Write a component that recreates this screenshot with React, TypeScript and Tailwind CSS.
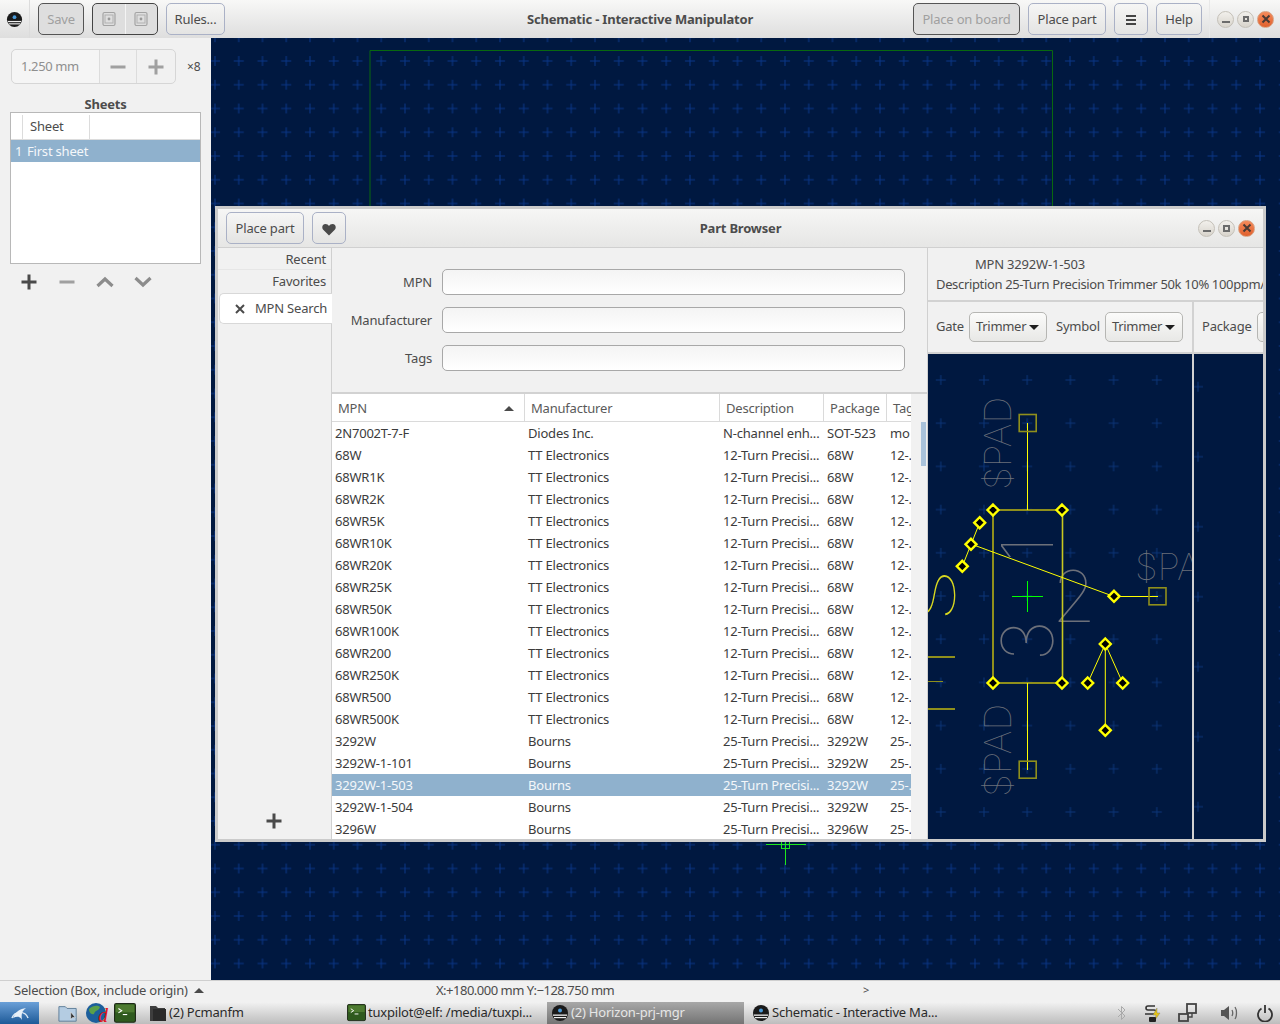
import React from "react";

const rows: [string, string, string, string, string][] = [
  ["2N7002T-7-F", "Diodes Inc.", "N-channel enh...", "SOT-523", "mo"],
  ["68W", "TT Electronics", "12-Turn Precisi...", "68W", "12-."],
  ["68WR1K", "TT Electronics", "12-Turn Precisi...", "68W", "12-."],
  ["68WR2K", "TT Electronics", "12-Turn Precisi...", "68W", "12-."],
  ["68WR5K", "TT Electronics", "12-Turn Precisi...", "68W", "12-."],
  ["68WR10K", "TT Electronics", "12-Turn Precisi...", "68W", "12-."],
  ["68WR20K", "TT Electronics", "12-Turn Precisi...", "68W", "12-."],
  ["68WR25K", "TT Electronics", "12-Turn Precisi...", "68W", "12-."],
  ["68WR50K", "TT Electronics", "12-Turn Precisi...", "68W", "12-."],
  ["68WR100K", "TT Electronics", "12-Turn Precisi...", "68W", "12-."],
  ["68WR200", "TT Electronics", "12-Turn Precisi...", "68W", "12-."],
  ["68WR250K", "TT Electronics", "12-Turn Precisi...", "68W", "12-."],
  ["68WR500", "TT Electronics", "12-Turn Precisi...", "68W", "12-."],
  ["68WR500K", "TT Electronics", "12-Turn Precisi...", "68W", "12-."],
  ["3292W", "Bourns", "25-Turn Precisi...", "3292W", "25-."],
  ["3292W-1-101", "Bourns", "25-Turn Precisi...", "3292W", "25-."],
  ["3292W-1-503", "Bourns", "25-Turn Precisi...", "3292W", "25-."],
  ["3292W-1-504", "Bourns", "25-Turn Precisi...", "3292W", "25-."],
  ["3296W", "Bourns", "25-Turn Precisi...", "3296W", "25-."],
];

function Btn({ w, children }: { w: string; children: React.ReactNode }) {
  return (
    <div className={`${w} h-[32px] pt-[2px] flex items-center justify-center rounded-[5px] border border-[#aab1c6] bg-linear-to-b from-[#f6f6f5] to-[#e4e4e3] text-[#4c4c4c]`}>
      {children}
    </div>
  );
}

function HorizonIcon({ size = 18 }: { size?: number }) {
  return (
    <svg width={size} height={size} viewBox="0 0 18 18" className="shrink-0">
      <circle cx="9" cy="9" r="8" fill="#1a1a1a" />
      <circle cx="9" cy="6.5" r="2" fill="#4a9ad8" />
      <rect x="2" y="10.5" width="14" height="1.3" fill="#eee" />
      <rect x="3" y="13" width="12" height="1.2" fill="#eee" />
    </svg>
  );
}

function PhotoIcon() {
  return (
    <svg width="16" height="16" viewBox="0 0 16 16">
      <rect x="2" y="1.5" width="12" height="13" rx="1.5" fill="none" stroke="#a3a3a3" strokeWidth="1.2" />
      <rect x="4" y="4" width="8" height="8" fill="none" stroke="#b0b0b0" />
      <circle cx="8" cy="8" r="1.4" fill="#999" />
    </svg>
  );
}

function WinButtons({ dark }: { dark?: boolean }) {
  return (
    <div className="flex items-center gap-[3px]">
      <div className="w-[17px] h-[17px] rounded-full border border-[#c4c0b8] bg-linear-to-b from-[#f2f0ec] to-[#d8d4cc] flex items-center justify-center">
        <div className="w-[8px] h-[2px] mt-[5px] bg-[#6b6b6b]" />
      </div>
      <div className="w-[17px] h-[17px] rounded-full border border-[#c4c0b8] bg-linear-to-b from-[#f2f0ec] to-[#d8d4cc] flex items-center justify-center">
        <div className={`${dark ? "w-[7px] h-[7px]" : "w-[6px] h-[6px]"} border-2 border-[#6b6b6b]`} />
      </div>
      <div className="w-[17px] h-[17px] rounded-full border border-[#d8a080] bg-linear-to-b from-[#f58a5a] to-[#e0602c] flex items-center justify-center">
        <svg width="10" height="10" viewBox="0 0 10 10">
          <path d="M1.5 1.5L8.5 8.5M8.5 1.5L1.5 8.5" stroke="#4a3a34" strokeWidth="2" />
        </svg>
      </div>
    </div>
  );
}

function Plus({ color = "#4a4a4a" }: { color?: string }) {
  return (
    <svg width="16" height="16" viewBox="0 0 16 16">
      <rect x="0.5" y="6.5" width="15" height="3" fill={color} />
      <rect x="6.5" y="0.5" width="3" height="15" fill={color} />
    </svg>
  );
}

function Minus({ color = "#a0a0a0" }: { color?: string }) {
  return (
    <svg width="16" height="16" viewBox="0 0 16 16">
      <rect x="0.5" y="6.5" width="15" height="3" fill={color} />
    </svg>
  );
}

function Chevron({ up }: { up?: boolean }) {
  return (
    <svg width="18" height="12" viewBox="0 0 18 12">
      <path d={up ? "M1.5 10L9 3l7.5 7" : "M1.5 2L9 9l7.5-7"} fill="none" stroke="#8c8c8c" strokeWidth="3.2" />
    </svg>
  );
}

function Caret() {
  return <div className="w-0 h-0 border-x-[5px] border-x-transparent border-t-[5px] border-t-[#1e1e1e]" />;
}

function Dropdown({ label }: { label: string }) {
  return (
    <div className="w-[78px] h-[30px] shrink-0 flex items-center justify-between pl-[6px] pr-[7px] rounded-[5px] border border-[#b6b6b3] bg-linear-to-b from-[#fbfbfa] to-[#e8e8e6] text-[#4c4c4c]">
      <span className="tracking-[-0.3px]">{label}</span>
      <Caret />
    </div>
  );
}

function MainCanvas() {
  return (
    <svg className="absolute inset-0 w-full h-full" viewBox="211 38 1069 942">
      <defs>
        <pattern id="grid" patternUnits="userSpaceOnUse" x="203.125" y="49.125" width="23.75" height="23.75">
          <path d="M6.875 11.875h10M11.875 6.875v10" stroke="#0a3688" strokeWidth="1" />
        </pattern>
      </defs>
      <rect x="211" y="38" width="1069" height="942" fill="#001840" />
      <rect x="211" y="38" width="1069" height="942" fill="url(#grid)" />
      <path d="M370 400V50.500H1052.500V400" fill="none" stroke="#08680f" strokeWidth="1" />
      <g stroke="#1ee81e" strokeWidth="1" fill="none" shapeRendering="crispEdges">
        <path d="M766 844.500H806M785.500 848V865" />
        <rect x="781.500" y="841.500" width="8" height="7" />
        <path d="M785.500 841V848" />
      </g>
    </svg>
  );
}

function Diamond({ x, y }: { x: number; y: number }) {
  return <path d={`M${x} ${y - 5.5}L${x + 5.5} ${y}L${x} ${y + 5.5}L${x - 5.5} ${y}Z`} fill="#000" stroke="#ffff00" strokeWidth="2.4" />;
}

function Pad({ x, y }: { x: number; y: number }) {
  return <rect x={x - 8.5} y={y - 8.5} width="17" height="17" fill="none" stroke="#8f8f1c" strokeWidth="1.6" />;
}

const strokeFont = { fontFamily: "Inter, sans-serif", fontWeight: 100 };

function SymbolPreview() {
  return (
    <svg className="w-full h-full block" viewBox="928 354 264 485">
      <defs>
        <pattern id="pgrid" patternUnits="userSpaceOnUse" x="919.200" y="358.400" width="43.200" height="43.200">
          <path d="M16.600 21.600h10M21.600 16.600v10" stroke="#0b3478" strokeWidth="1" />
        </pattern>
      </defs>
      <rect x="928" y="354" width="264" height="485" fill="#001840" />
      <rect x="928" y="354" width="264" height="485" fill="url(#pgrid)" />

      <g fill="#6c707a" style={strokeFont}>
        <text transform="translate(1011 490) rotate(-90)" fontSize="37" textLength="93" lengthAdjust="spacingAndGlyphs">$PAD</text>
        <text transform="translate(1011 797) rotate(-90)" fontSize="37" textLength="93" lengthAdjust="spacingAndGlyphs">$PAD</text>
        <text x="1135" y="580" fontSize="37">$PAD</text>
        <text transform="translate(1053 549) rotate(-90)" fontSize="71" textAnchor="middle">1</text>
        <text transform="translate(1053 641) rotate(-90)" fontSize="71" textAnchor="middle">3</text>
        <text x="1074" y="622" fontSize="71" textAnchor="middle">2</text>
      </g>
      <text transform="translate(955 622) rotate(-90) scale(1.600 1)" fontSize="55" fill="#d8d820" style={strokeFont}>S</text>

      <g stroke="#8f8f1c" strokeWidth="2" fill="none">
        <path d="M993 510H1062M993 683H1062M993 510V683" />
        <path d="M928 657H955M928 709H955" />
      </g>
      <path d="M928 681.500H943" stroke="#8f8f1c" strokeWidth="1" />
      <path d="M1062.500 510V683" stroke="#c8c820" strokeWidth="1.600" />
      <g stroke="#ffff00" strokeWidth="1" fill="none">
        <path d="M1027.500 423V510M1027.500 683V770M1114 596.500H1158M971 544L1114 596.500M979.700 522.700L962.300 566.300M1105.300 644L1087.700 683M1105.300 644L1122.700 683M1105.300 644V730" />
      </g>
      <Pad x={1027.7} y={423} />
      <Pad x={1027.7} y={769.7} />
      <Pad x={1157.5} y={596.3} />
      <path d="M1012 596.500H1043M1027.500 581V612" stroke="#00ff00" strokeWidth="1" shapeRendering="crispEdges" />
      {[
        [993, 510], [1062, 510], [993, 683], [1062, 683],
        [979.7, 522.7], [971, 544.3], [962.3, 566.3], [1114, 596.3],
        [1105.3, 644], [1087.7, 683], [1122.7, 683], [1105.3, 730.3],
      ].map(([x, y]) => (
        <Diamond key={`${x}-${y}`} x={x} y={y} />
      ))}
    </svg>
  );
}

function PackagePreview() {
  return (
    <svg className="w-full h-full block" viewBox="1194 354 70 485" preserveAspectRatio="xMinYMin slice">
      <defs>
        <pattern id="qgrid" patternUnits="userSpaceOnUse" x="1163" y="351.700" width="70" height="70">
          <path d="M30 35h10M35 30v10" stroke="#0b3478" strokeWidth="1" />
        </pattern>
      </defs>
      <rect x="1194" y="354" width="70" height="485" fill="#001840" />
      <rect x="1194" y="354" width="70" height="485" fill="url(#qgrid)" />
    </svg>
  );
}

function PartBrowser() {
  return (
    <div className="absolute left-[4px] top-[168px] w-[1051px] h-[636px] border-[3px] border-[#cbcbcb] flex flex-col bg-[#f1f1f1] text-[#4c4c4c]">
      <div className="h-[39px] shrink-0 grid grid-cols-[1fr_auto_1fr] items-center px-[8px] border-b border-[#d0d0d0] bg-linear-to-b from-[#f6f6f5] to-[#e6e6e5]">
        <div className="flex items-center gap-[8px]">
          <Btn w="w-[78px]"><span>Place part</span></Btn>
          <Btn w="w-[34px]">
            <svg width="14" height="13" viewBox="0 0 14 13">
              <path d="M7 12.500L1 6.500C-.5 4.500.3 1 3.500 1 5 1 6.300 1.800 7 3c.7-1.200 2-2 3.500-2 3.200 0 4 3.500 2.500 5.500z" fill="#4a4a4a" />
            </svg>
          </Btn>
        </div>
        <div className="font-bold text-[#4c4c4c] pt-[2px]">Part Browser</div>
        <div className="flex justify-end"><WinButtons dark /></div>
      </div>
      <div className="flex-1 flex min-h-0">
        <div className="w-[114px] shrink-0 flex flex-col border-r border-[#d0d0d0]">
          <div className="h-[22px] pt-[2px] flex items-center justify-end pr-[5px] border-b border-[#e6e6e6]">Recent</div>
          <div className="h-[22px] pt-[2px] flex items-center justify-end pr-[5px]">Favorites</div>
          <div className="h-[31px] mt-[1px] ml-[1px] -mr-[1px] flex items-center pl-[15px] gap-[10px] bg-white border border-[#d8d8d8] border-r-0 rounded-l-[5px]">
            <svg width="10" height="10" viewBox="0 0 10 10">
              <path d="M1 1L9 9M9 1L1 9" stroke="#4a4a4a" strokeWidth="2" />
            </svg>
            <span>MPN Search</span>
          </div>
          <div className="flex-1 flex items-end justify-center pr-[2px] pb-[10px]"><Plus /></div>
        </div>
        <div className="w-[596px] shrink-0 flex flex-col min-h-0 border-r border-[#d0d0d0]">
          <div className="h-[144px] shrink-0 grid grid-cols-[100px_463px] items-center content-start pt-[21px] gap-x-[10px] gap-y-[12px]">
            {["MPN", "Manufacturer", "Tags"].map((l) => (
              <React.Fragment key={l}>
                <div className="text-right pt-[2px]">{l}</div>
                <div className="h-[26px] rounded-[5px] border border-[#a8a8a8] bg-linear-to-b from-[#f4f4f4] to-white" />
              </React.Fragment>
            ))}
          </div>
          <div className="h-[2px] shrink-0 bg-[#d2d2d2]" />
          <div className="flex-1 flex min-h-0">
            <div className="w-[579px] shrink-0 bg-white overflow-hidden">
              <div className="h-[28px] grid grid-cols-[193px_195px_104px_63px_24px] border-b border-[#dadada] text-[#5a5a5a]">
                <div className="flex items-center justify-between pt-[2px] pl-[6px] pr-[10px] border-r border-[#dadada]">
                  <span>MPN</span>
                  <div className="w-0 h-0 border-x-[5px] border-x-transparent border-b-[5px] border-b-[#4a4a4a]" />
                </div>
                <div className="flex items-center pt-[2px] pl-[6px] border-r border-[#dadada]">Manufacturer</div>
                <div className="flex items-center pt-[2px] pl-[6px] border-r border-[#dadada]">Description</div>
                <div className="flex items-center pt-[2px] pl-[6px] border-r border-[#dadada] whitespace-nowrap">Package</div>
                <div className="flex items-center pt-[2px] pl-[6px] overflow-hidden">Tags</div>
              </div>
              {rows.map((r) => {
                const sel = r[0] === "3292W-1-503";
                return (
                  <div key={r[0]} className={`h-[22px] grid grid-cols-[193px_195px_104px_63px_24px] items-center ${sel ? "bg-[#8fb1cd] text-[#f4f7fa]" : "text-[#3c3c3c]"}`}>
                    {r.map((c, i) => (
                      <div key={i} className="pl-[3px] pt-[2px] overflow-hidden whitespace-nowrap">{c}</div>
                    ))}
                  </div>
                );
              })}
            </div>
            <div className="w-[16px] shrink-0 bg-[#f1f1f1] relative">
              <div className="absolute left-[10px] top-[28px] w-[5px] h-[44px] bg-[#a9c2da]" />
            </div>
          </div>
        </div>
        <div className="flex-1 min-w-0 flex flex-col overflow-hidden">
          <div className="h-[54px] shrink-0 flex flex-col justify-center gap-[2px] pl-[8px] border-b-2 border-[#d2d2d2] whitespace-nowrap">
            <div className="pl-[39px] leading-[18px]">MPN 3292W-1-503</div>
            <div className="leading-[18px] tracking-[-0.35px]">Description 25-Turn Precision Trimmer 50k 10% 100ppm/°C</div>
          </div>
          <div className="flex-1 flex min-h-0">
            <div className="w-[264px] shrink-0 flex flex-col">
              <div className="h-[52px] shrink-0 flex items-center pl-[8px] gap-[5px] border-b-2 border-[#d2d2d2]">
                <span>Gate</span>
                <Dropdown label="Trimmer" />
                <span className="ml-[4px]">Symbol</span>
                <Dropdown label="Trimmer" />
              </div>
              <div className="flex-1 min-h-0"><SymbolPreview /></div>
            </div>
            <div className="w-[2px] shrink-0 bg-[#d2d2d2]" />
            <div className="flex-1 min-w-0 flex flex-col">
              <div className="h-[52px] shrink-0 flex items-center pl-[8px] gap-[5px] border-b-2 border-[#d2d2d2] overflow-hidden">
                <span>Package</span>
                <div className="w-[30px] h-[30px] shrink-0 rounded-[5px] border border-[#b6b6b3] bg-linear-to-b from-[#fbfbfa] to-[#e8e8e6]" />
              </div>
              <div className="flex-1 min-h-0"><PackagePreview /></div>
            </div>
          </div>
        </div>
      </div>
    </div>
  );
}

function TaskItem({ w, active, icon, label }: { w: string; active?: boolean; icon: React.ReactNode; label: string }) {
  return (
    <div className={`${w} h-full shrink-0 flex items-center gap-[2px] overflow-hidden whitespace-nowrap ${active ? "bg-linear-to-b from-[#a8a8a8] to-[#747474] text-[#e6e6e6]" : "text-[#2a2a2a]"}`}>
      {icon}
      <span>{label}</span>
    </div>
  );
}

function TermIcon({ size = 22 }: { size?: number }) {
  return (
    <svg width={size} height={size * 0.9} viewBox="0 0 20 18" className="shrink-0">
      <rect x="0.500" y="0.500" width="19" height="17" rx="1.500" fill="#2f5a1e" stroke="#1f2a18" />
      <rect x="1.500" y="1.500" width="17" height="7" fill="#4d7a30" />
      <path d="M4 5l3 2-3 2" fill="none" stroke="#fff" strokeWidth="1" />
      <rect x="8" y="10" width="4" height="1" fill="#fff" />
    </svg>
  );
}

export default function App() {
  return (
    <div className="w-[1280px] h-[1024px] flex flex-col overflow-hidden bg-[#f1f1f1] font-['Noto_Sans',sans-serif] text-[13px] tracking-[-0.2px] text-[#4c4c4c]">
      <header className="h-[38px] shrink-0 grid grid-cols-[1fr_auto_1fr] items-center bg-linear-to-b from-[#f8f8f7] to-[#dedede]">
        <div className="flex items-center h-full">
          <div className="w-[30px] h-full shrink-0 flex items-center justify-center border-r border-[#dcdcdc]">
            <HorizonIcon size={17} />
          </div>
          <div className="ml-[8px] w-[46px] h-[32px] pt-[2px] flex items-center justify-center rounded-[5px] border border-[#555] bg-[#dedede] text-[#a0a0a0]">Save</div>
          <div className="ml-[8px] w-[66px] h-[32px] flex rounded-[5px] border border-[#444] bg-[#dedede]">
            <div className="flex-1 flex items-center justify-center border-r border-[#f4f4f4]"><PhotoIcon /></div>
            <div className="flex-1 flex items-center justify-center"><PhotoIcon /></div>
          </div>
          <div className="ml-[8px]"><Btn w="w-[59px]"><span>Rules...</span></Btn></div>
        </div>
        <div className="font-bold pt-[2px]">Schematic - Interactive Manipulator</div>
        <div className="flex items-center justify-end h-full">
          <div className="w-[107px] h-[32px] pt-[2px] flex items-center justify-center rounded-[5px] border border-[#555] bg-[#dedede] text-[#a0a0a0]">Place on board</div>
          <div className="ml-[8px]"><Btn w="w-[78px]"><span>Place part</span></Btn></div>
          <div className="ml-[8px]">
            <Btn w="w-[34px]">
              <svg width="12" height="10" viewBox="0 0 12 10">
                <path d="M1 1h10M1 5h10M1 9h10" stroke="#444" strokeWidth="2" />
              </svg>
            </Btn>
          </div>
          <div className="ml-[8px]"><Btn w="w-[46px]"><span>Help</span></Btn></div>
          <div className="ml-[7px] h-full border-l border-[#e8e8e8] pl-[7px] pr-[6px] flex items-center"><WinButtons /></div>
        </div>
      </header>

      <div className="flex-1 flex min-h-0">
        <aside className="w-[211px] shrink-0 flex flex-col items-stretch bg-[#f1f1f1]">
          <div className="mt-[11px] ml-[11px] flex items-center">
            <div className="w-[165px] h-[35px] flex rounded-[5px] border border-[#d6d6d6] text-[#8f8f8f] bg-[#f1f1f1]">
              <div className="w-[88px] flex items-center pl-[9px] bg-[#f5f5f5] rounded-l-[5px] border-r border-[#dcdcdc] tracking-[-0.4px]">1.250 mm</div>
              <div className="w-[37px] flex items-center justify-center border-r border-[#dcdcdc]"><Minus /></div>
              <div className="flex-1 flex items-center justify-center"><Plus color="#a0a0a0" /></div>
            </div>
            <span className="ml-[11px] text-[12px]">×8</span>
          </div>
          <div className="mt-[11px] text-center font-bold leading-[18px]">Sheets</div>
          <div className="ml-[10px] -mt-[1px] w-[191px] h-[152px] border border-[#b8b8b8] bg-white">
            <div className="h-[27px] pt-[2px] flex border-b border-[#dcdcdc]">
              <div className="w-[12px] border-r border-[#dcdcdc]" />
              <div className="w-[67px] flex items-center pl-[7px] border-r border-[#dcdcdc]">Sheet</div>
            </div>
            <div className="h-[22px] pt-[2px] flex items-center bg-[#8fb1cd] text-[#f4f7fa]">
              <span className="w-[16px] pl-[4px]">1</span>
              <span>First sheet</span>
            </div>
          </div>
          <div className="mt-[10px] ml-[10px] flex items-center">
            <div className="w-[38px] flex justify-center"><Plus /></div>
            <div className="w-[38px] flex justify-center"><Minus /></div>
            <div className="w-[38px] flex justify-center"><Chevron up /></div>
            <div className="w-[38px] flex justify-center"><Chevron /></div>
          </div>
        </aside>
        <main className="flex-1 relative overflow-hidden">
          <MainCanvas />
          <PartBrowser />
        </main>
      </div>

      <div className="h-[22px] shrink-0 pb-[2px] flex items-center border-t border-[#cfcfcf] bg-[#f1f1f1] text-[#4c4c4c]">
        <div className="w-[436px] shrink-0 pl-[14px] flex items-center">
          <span>Selection (Box, include origin)</span>
          <div className="ml-[6px] w-0 h-0 border-x-[5px] border-x-transparent border-b-[5px] border-b-[#4a4a4a]" />
        </div>
        <span className="w-[427px] shrink-0 tracking-[-0.5px]">X:+180.000 mm Y:−128.750 mm</span>
        <span className="text-[11px]">&gt;</span>
      </div>

      <footer className="h-[22px] shrink-0 flex items-center bg-linear-to-b from-[#f2f2f2] to-[#bdbdbd]">
        <div className="w-[39px] h-full shrink-0 flex items-center justify-center bg-linear-to-b from-[#6aa0d8] to-[#1c5a98]">
          <svg width="20" height="20" viewBox="0 0 20 20">
            <path d="M2 15A8.500 8.500 0 0 1 18 15" fill="none" stroke="#dfeaf4" strokeWidth="1.400" />
            <path d="M3 15C6 8 10 6 16 5C12 8 11 11 12 17C10 13 7 13 3 15Z" fill="#e8f0f8" />
          </svg>
        </div>
        <div className="ml-[19px] w-[20px] flex justify-center">
          <svg width="22" height="20" viewBox="0 0 22 20">
            <path d="M1 3h7l2 2h10v14H1z" fill="#b4cce2" stroke="#5a7a96" />
            <path d="M14 9v8l2-2 3 0z" fill="#333" stroke="#fff" strokeWidth="0.500" />
          </svg>
        </div>
        <div className="ml-[7px] w-[24px] flex justify-center">
          <svg width="24" height="22" viewBox="0 0 24 22">
            <circle cx="11" cy="11" r="10" fill="#1c5f9c" />
            <path d="M4 7c4-4 9-4 11-2-1 4-5 3-6 7-3 1-5-2-5-5z" fill="#5aa04a" />
            <text x="13" y="20" fontSize="20" fontStyle="italic" fontFamily="Liberation Serif, serif" fill="#e0141c">d</text>
          </svg>
        </div>
        <div className="ml-[5px]"><TermIcon /></div>
        <div className="ml-[13px]">
          <TaskItem
            w="w-[198px]"
            label="(2) Pcmanfm"
            icon={
              <svg width="18" height="18" viewBox="0 0 18 18" className="shrink-0">
                <path d="M1 2h6l2 2h7v13H1z" fill="#3e3e3e" />
                <path d="M4 5h13v12H4z" fill="#2a2a2a" />
              </svg>
            }
          />
        </div>
        <TaskItem w="w-[200px]" label="tuxpilot@elf: /media/tuxpi..." icon={<TermIcon size={19} />} />
        <TaskItem w="w-[197px]" active label="(2) Horizon-prj-mgr" icon={<div className="ml-[4px]"><HorizonIcon /></div>} />
        <TaskItem w="w-[200px]" label="Schematic - Interactive Ma..." icon={<div className="ml-[8px]"><HorizonIcon /></div>} />
        <div className="flex-1 flex items-center justify-end pr-[6px]">
          <svg width="10" height="16" viewBox="0 0 10 16">
            <path d="M1 4l7 7-3.500 3.500V1.500L8 5 1 12" fill="none" stroke="#aaa" strokeWidth="1" />
          </svg>
          <svg className="ml-[16px]" width="20" height="20" viewBox="0 0 20 20">
            <path d="M12 3H5a2 2 0 0 0 0 4h6a2 2 0 0 1 0 4H2" fill="none" stroke="#333" strokeWidth="1.600" />
            <path d="M14 5l-4 7h3l-1 5 5-7h-3z" fill="#e4c418" stroke="#776" strokeWidth="0.400" />
            <rect x="6" y="14" width="7" height="5" rx="1" fill="#222" />
          </svg>
          <svg className="ml-[14px]" width="22" height="20" viewBox="0 0 22 20">
            <rect x="10" y="1" width="9" height="9" fill="none" stroke="#444" strokeWidth="1.800" />
            <rect x="2" y="11" width="9" height="7" fill="none" stroke="#444" strokeWidth="1.800" />
            <path d="M15 10v4h-4" fill="none" stroke="#444" strokeWidth="1.400" />
          </svg>
          <svg className="ml-[21px]" width="20" height="18" viewBox="0 0 20 18">
            <path d="M1 6h3l5-4v14l-5-4H1z" fill="#555" />
            <path d="M12 6c1 2 1 4 0 6M15 3c2 3 2 9 0 12" fill="none" stroke="#666" strokeWidth="1.300" />
          </svg>
          <svg className="ml-[16px]" width="18" height="18" viewBox="0 0 18 18">
            <path d="M5.500 4.500a7 7 0 1 0 7 0M9 1v8" fill="none" stroke="#333" strokeWidth="1.800" />
          </svg>
        </div>
      </footer>
    </div>
  );
}
